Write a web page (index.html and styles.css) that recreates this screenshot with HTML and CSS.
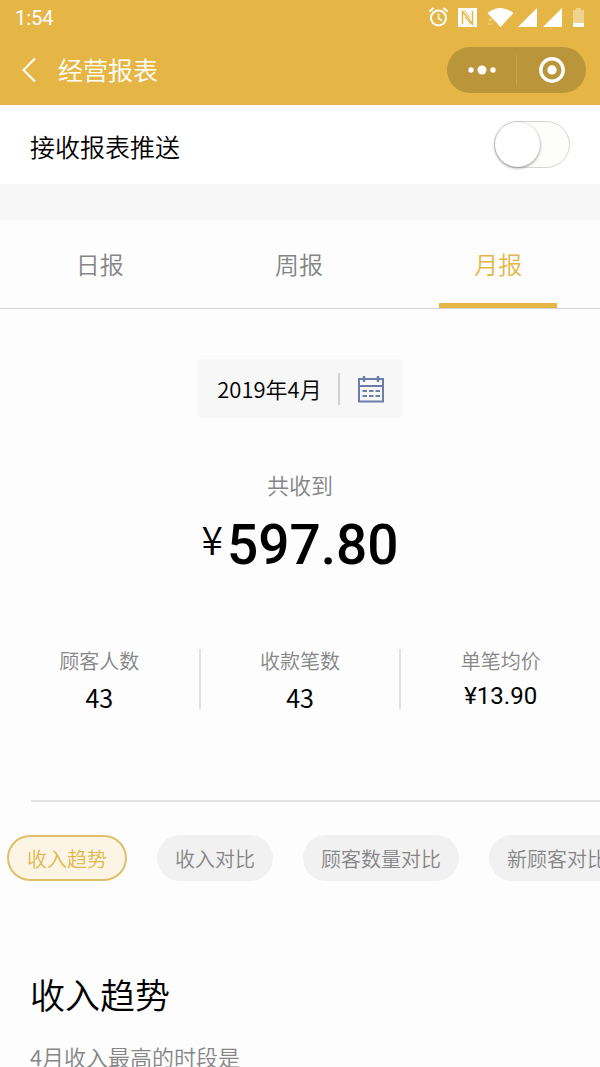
FILE: index.html
```html
<!DOCTYPE html>
<html lang="zh-CN">
<head>
<meta charset="utf-8">
<meta name="viewport" content="width=device-width, initial-scale=1">
<title>经营报表</title>
<link rel="stylesheet" href="styles.css">
</head>
<body>
<header class="header">
  <div class="status">
    <span class="clock">1:54</span>
    <svg class="status-icons" width="160" height="24" viewBox="0 0 160 24" aria-hidden="true">
      <g fill="none" stroke="#fff" stroke-width="2">
        <circle cx="13.500" cy="13" r="7.500"/>
        <path d="M13.500 8.500v5l3.500 2.200" stroke-width="1.500"/>
        <path d="M4.500 6.500l4-3.500M22.500 6.500l-4-3.500"/>
      </g>
      <rect x="33" y="3" width="19" height="19" fill="#fff"/>
      <path d="M37.500 19V6.500l10 12.500V6" fill="none" stroke="#e5b646" stroke-width="1.500"/>
      <path d="M40 12l6 7.500M39.500 5.500l5.500 7" fill="none" stroke="#e5b646" stroke-width="1"/>
      <path d="M62.500 8q13-10 26 0L75.500 22z" fill="#fff"/>
      <path d="M63 15h4l-2-2M63 19h4" fill="none" stroke="#f3d795" stroke-width="1"/>
      <path d="M93 22L112 3v19zM118 22L137 3v19z" fill="#fff"/>
      <path d="M151 3h5v2h3v17h-11V5h3z" fill="#efd491"/>
      <path d="M148 18h11v4h-11z" fill="#fff"/>
    </svg>
  </div>
  <nav class="nav">
    <button class="back" type="button" aria-label="返回">
      <svg width="16" height="26" viewBox="0 0 16 26"><path d="M14 1.500L2.500 13 14 24.500" fill="none" stroke="#fff" stroke-width="2"/></svg>
    </button>
    <h1 class="title">经营报表</h1>
    <div class="capsule">
      <button class="capsule-btn" type="button" aria-label="更多">
        <svg width="30" height="12" viewBox="0 0 30 12" fill="#fff"><circle cx="4" cy="6" r="2.700"/><circle cx="15" cy="6" r="4.500"/><circle cx="26" cy="6" r="2.700"/></svg>
      </button>
      <button class="capsule-btn" type="button" aria-label="关闭">
        <svg width="28" height="28" viewBox="0 0 28 28"><circle cx="14" cy="14" r="11.200" fill="none" stroke="#fff" stroke-width="3.400"/><circle cx="14" cy="14" r="4.700" fill="#fff"/></svg>
      </button>
    </div>
  </nav>
</header>

<main>
  <div class="push-row">
    <label for="push">接收报表推送</label>
    <input class="switch" id="push" type="checkbox" role="switch">
  </div>

  <div class="tabs" role="tablist">
    <button class="tab" type="button" role="tab" aria-selected="false">日报</button>
    <button class="tab" type="button" role="tab" aria-selected="false">周报</button>
    <button class="tab tab-active" type="button" role="tab" aria-selected="true">月报</button>
  </div>

  <section class="summary">
    <button class="date" type="button">
      <span class="date-text">2019年4月</span>
      <svg width="28" height="28" viewBox="0 0 28 28" fill="none" stroke="#6b7da8" stroke-width="2" aria-hidden="true">
        <path d="M2 4h24v22.500H2zM2 11h24"/>
        <path d="M7 1v6M21 1v6" stroke-width="2.400"/>
        <path d="M5.500 16h4.500M12 16h4.500M18.500 16h4.500M5.500 21h4.500M12 21h4.500M18.500 21h4.500"/>
      </svg>
    </button>
    <p class="total-label">共收到</p>
    <p class="total"><span class="yen">¥</span><span class="amount">597.80</span></p>
  </section>

  <dl class="stats">
    <div class="stat"><dt>顾客人数</dt><dd>43</dd></div>
    <div class="stat"><dt>收款笔数</dt><dd>43</dd></div>
    <div class="stat"><dt>单笔均价</dt><dd class="price">¥13.90</dd></div>
  </dl>

  <div class="chips">
    <button class="chip chip-active" type="button">收入趋势</button>
    <button class="chip" type="button">收入对比</button>
    <button class="chip" type="button">顾客数量对比</button>
    <button class="chip" type="button">新顾客对比</button>
  </div>

  <section class="trend">
    <h2>收入趋势</h2>
    <p>4月收入最高的时段是</p>
  </section>
</main>
</body>
</html>
```
FILE: styles.css
```css
* {
  box-sizing: border-box;
}

html {
  overflow-x: hidden;
  scrollbar-width: none;
}

body,
h1,
h2,
p,
dl,
dd {
  margin: 0;
  font-weight: 350;
}

body {
  background: #fdfdfd;
  color: #000;
  font-family: "Noto Sans CJK SC", sans-serif;
}

button {
  margin: 0;
  padding: 0;
  border: 0;
  background: none;
  color: inherit;
  font: inherit;
}

svg {
  display: block;
}

.header {
  background: #e5b646;
  color: #fff;
}

.status {
  display: flex;
  align-items: center;
  justify-content: space-between;
  height: 36px;
  padding: 0 15px;
}

.status-icons {
  margin-bottom: 2px;
}

.clock {
  font: 400 20px/36px Roboto, sans-serif;
}

.nav {
  display: flex;
  align-items: center;
  height: 69px;
  padding: 0 14px 2px 21px;
}

.title {
  margin-left: 21px;
  padding-bottom: 2px;
  font-size: 25px;
  line-height: 36px;
}

.capsule {
  display: flex;
  align-items: center;
  width: 139px;
  height: 46px;
  margin-left: auto;
  border-radius: 23px;
  background: #ba953a;
}

.capsule-btn {
  display: flex;
  flex: 1;
  align-items: center;
  justify-content: center;
  height: 30px;
}

.capsule-btn + .capsule-btn {
  border-left: 1px solid #c9a550;
}

.push-row {
  display: flex;
  align-items: center;
  justify-content: space-between;
  height: 79px;
  padding: 0 30px;
  background: #fff;
  font-size: 25px;
  line-height: 36px;
}

.push-row label {
  padding-top: 2px;
}

.switch {
  appearance: none;
  width: 76px;
  height: 47px;
  margin: 0;
  border: 1px solid #d3d3d0;
  border-radius: 24px;
  background: #fdfdfb;
}

.switch::before {
  content: "";
  display: block;
  width: 45px;
  height: 45px;
  border-radius: 50%;
  background: #fff;
  box-shadow: 0 1px 3px #888;
}

.switch:checked {
  background: #e5b646;
}

.switch:checked::before {
  margin-left: auto;
}

.tabs {
  display: flex;
  height: 125px;
  padding-right: 2px;
  border-top: 36px solid #f7f7f7;
  border-bottom: 1px solid #d4d4d4;
}

.tab {
  display: flex;
  flex: 1;
  flex-direction: column;
  align-items: center;
  color: #858585;
  font-size: 24px;
  line-height: 88px;
}

.tab-active {
  color: #e5b646;
}

.tab-active::after {
  content: "";
  width: 118px;
  height: 6px;
  margin-top: -5px;
  background: #e5b646;
}

.summary {
  display: flex;
  flex-direction: column;
  align-items: center;
  padding-top: 50px;
}

.date {
  display: flex;
  align-items: center;
  height: 59px;
  padding: 0 18px 0 20px;
  border-radius: 5px;
  background: #f7f7f7;
  font-size: 22px;
  line-height: 30px;
}

.date-text {
  margin-right: 17px;
  padding: 0 16px 2px 0;
  border-right: 2px solid #d2d2d2;
}

.total-label {
  margin-top: 49px;
  color: #858585;
  font-size: 22px;
  line-height: 34px;
}

.total {
  display: flex;
  height: 85px;
  font-family: Roboto, sans-serif;
}

.yen {
  font-family: "Noto Sans CJK SC", sans-serif;
  font-size: 39px;
  line-height: 74px;
}

.amount {
  margin-left: 4px;
  font-size: 55px;
  font-weight: 500;
  line-height: 88px;
}

.stats {
  display: flex;
  margin-top: 63px;
  text-align: center;
}

.stat {
  flex: 1;
  height: 60px;
}

.stat + .stat {
  border-left: 2px solid #e2e2e2;
}

.stat dt {
  color: #858585;
  font-size: 20px;
  line-height: 24px;
}

.stat dd {
  margin-top: 6px;
  font-size: 25px;
  font-weight: 400;
  line-height: 36px;
}

.stat .price {
  margin-top: 5px;
  font-family: Roboto, sans-serif;
  font-size: 24px;
}

.chips {
  display: flex;
  gap: 30px;
  margin-top: 91px;
  padding: 35px 0 0 7px;
  overflow: hidden;
  background: linear-gradient(#e2e2e2, #e2e2e2) 31px 0 / 100% 2px no-repeat;
}

.chip {
  flex: none;
  height: 46px;
  padding: 0 18px;
  border-radius: 23px;
  background: #f1f1f1;
  color: #858585;
  font-size: 20px;
  line-height: 48px;
}

.chip-active {
  border: 2px solid #dfbf6a;
  background: #fcf5e5;
  color: #e2b84e;
  line-height: 44px;
}

.trend {
  padding: 87px 30px 0;
}

.trend h2 {
  font-size: 35px;
  line-height: 52px;
}

.trend p {
  margin-top: 19px;
  color: #858585;
  font-size: 22px;
  line-height: 34px;
}
```
